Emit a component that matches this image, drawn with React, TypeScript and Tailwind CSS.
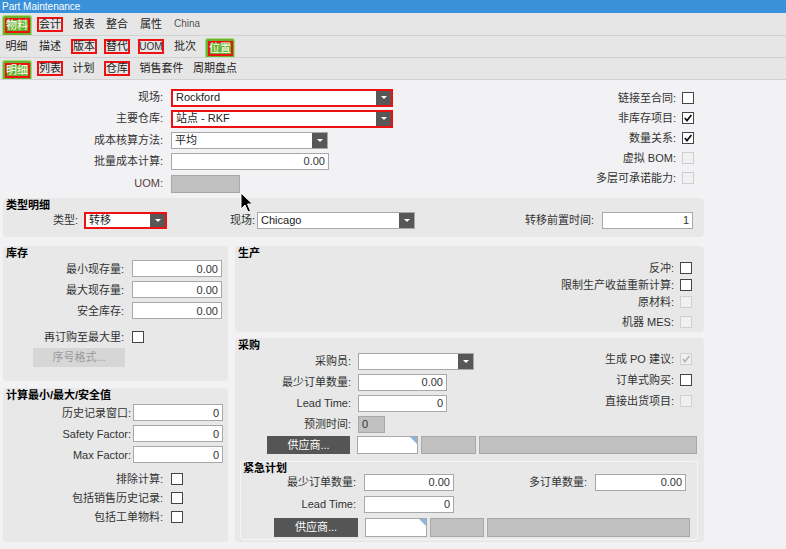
import React from "react";

/**
 * ==============   Bits   ================
 */

function Caret() {
  return (
    <span className="flex h-full w-[15px] shrink-0 items-center justify-center bg-[#575757]">
      <span className="h-0 w-0 border-x-[3px] border-t-[3px] border-x-transparent border-t-white" />
    </span>
  );
}

function Check({ checked = false, disabled = false }: { checked?: boolean; disabled?: boolean }) {
  return (
    <span
      className={
        disabled
          ? "flex h-[12px] w-[12px] shrink-0 items-center justify-center border border-[#d0d0d0] bg-[#f0f0f0]"
          : "flex h-[12px] w-[12px] shrink-0 items-center justify-center border border-[#444] bg-white"
      }
    >
      {checked ? (
        <svg width="10" height="10" viewBox="0 0 10 10">
          <path
            d="M1.8 5 L4 7.6 L8.4 2"
            stroke={disabled ? "#b5b5b5" : "#111"}
            strokeWidth="1.7"
            fill="none"
          />
        </svg>
      ) : null}
    </span>
  );
}

function Field({ className = "", value = "" }: { className?: string; value?: string }) {
  return (
    <div
      className={`flex h-[17px] shrink-0 items-center justify-end border border-[#a8a8a8] bg-white px-[3px] text-[11px] text-[#333] ${className}`}
    >
      {value}
    </div>
  );
}

function Select({ className = "", value = "", red = false }: { className?: string; value?: string; red?: boolean }) {
  return (
    <div
      className={`flex h-[17px] shrink-0 items-stretch bg-white ${
        red ? "border-2 border-[#ee1111]" : "border border-[#a8a8a8]"
      } ${className}`}
    >
      <span className="flex flex-1 items-center px-[3px] text-[11px] text-[#222]">{value}</span>
      <Caret />
    </div>
  );
}

function Panel({ title, className = "", children }: { title: string; className?: string; children?: React.ReactNode }) {
  return (
    <div className={`flex flex-col rounded-[4px] bg-[#e8e8e8] ${className}`}>
      <div className="h-[13px] pl-[3px] pt-[1px] text-[11px] font-bold leading-[12px] text-black">{title}</div>
      {children}
    </div>
  );
}

function CheckRow({ label, checked, disabled }: { label: string; checked?: boolean; disabled?: boolean }) {
  return (
    <div className="flex h-[12px] items-center justify-end gap-[6px] text-[11px] leading-[12px] text-[#333]">
      <span>{label}:</span>
      <Check checked={checked} disabled={disabled} />
    </div>
  );
}

function GreenTab({ label, className = "" }: { label: string; className?: string }) {
  return (
    <span
      className={`mt-[2px] flex w-[30px] shrink-0 items-center justify-center rounded-t-[3px] border border-b-0 border-[#a6d97c] bg-[#68b22e] ${className}`}
    >
      <span className="flex h-[15px] w-[25px] items-center justify-center whitespace-nowrap border-2 border-[#ee1111] text-[11px] leading-none text-white">
        {label}
      </span>
    </span>
  );
}

function RedTab({ label, className = "" }: { label: string; className?: string }) {
  return (
    <span
      className={`flex h-[15px] w-[26px] shrink-0 items-center justify-center self-center whitespace-nowrap border-2 border-[#ee1111] text-[11px] leading-none text-[#222] ${className}`}
    >
      {label}
    </span>
  );
}

function PlainTab({ label, className = "" }: { label: string; className?: string }) {
  return (
    <span
      className={`flex shrink-0 items-center justify-center self-center whitespace-nowrap text-[11px] leading-none text-[#222] ${className}`}
    >
      {label}
    </span>
  );
}

export default function App() {
  return (
    <div className="relative h-[549px] w-[786px] overflow-hidden bg-[#f2f2f4] font-['Liberation_Sans','Noto_Sans_CJK_SC',sans-serif]">
      {/* title bar */}
      <div className="flex h-[13px] items-center bg-[#3a91da] pl-[2px] text-[10px] leading-none text-white">
        Part Maintenance
      </div>

      {/* tab row 1 */}
      <div className="flex h-[23px] items-stretch border-b border-[#d2d2d2] bg-[#e6e6e6]">
        <GreenTab label="物料" className="ml-[2px]" />
        <RedTab label="会计" className="ml-[5px]" />
        <PlainTab label="报表" className="ml-[11px] w-[20px]" />
        <PlainTab label="整合" className="ml-[13px] w-[20px]" />
        <PlainTab label="属性" className="ml-[14px] w-[20px]" />
        <PlainTab label="China" className="ml-[13px] w-[26px] !text-[10px] !text-[#555]" />
      </div>

      {/* tab row 2 */}
      <div className="flex h-[22px] items-stretch border-b border-[#d2d2d2] bg-[#e6e6e6]">
        <PlainTab label="明细" className="ml-[6px] w-[21px]" />
        <PlainTab label="描述" className="ml-[13px] w-[20px]" />
        <RedTab label="版本" className="ml-[11px]" />
        <RedTab label="替代" className="ml-[7px]" />
        <RedTab label="UOM" className="ml-[8px] !text-[10px] !text-[#333]" />
        <PlainTab label="批次" className="ml-[11px] w-[20px]" />
        <GreenTab label="位置" className="ml-[10px]" />
      </div>

      {/* tab row 3 */}
      <div className="flex h-[22px] items-stretch border-b border-[#d2d2d2] bg-[#e6e6e6]">
        <GreenTab label="明细" className="ml-[2px]" />
        <RedTab label="列表" className="ml-[5px]" />
        <PlainTab label="计划" className="ml-[10px] w-[21px]" />
        <RedTab label="仓库" className="ml-[10px]" />
        <PlainTab label="销售套件" className="ml-[11px] w-[41px]" />
        <PlainTab label="周期盘点" className="ml-[11px] w-[44px]" />
      </div>

      {/* top form */}
      <div className="flex h-[118px] pt-[7px]">
        <div className="grid w-[400px] grid-cols-[163px_auto] content-start items-center gap-x-[8px] text-[11px] text-[#333]">
          <span className="flex h-[21px] items-center justify-end">现场:</span>
          <Select red value="Rockford" className="h-[18px] w-[222px]" />
          <span className="flex h-[21px] items-center justify-end">主要仓库:</span>
          <Select red value="站点 - RKF" className="h-[18px] w-[222px]" />
          <span className="flex h-[22px] items-center justify-end">成本核算方法:</span>
          <Select value="平均" className="w-[157px]" />
          <span className="flex h-[21px] items-center justify-end">批量成本计算:</span>
          <Field value="0.00" className="w-[158px]" />
          <span className="flex h-[23px] items-center justify-end text-[#5a3d3d]">UOM:</span>
          <div className="h-[18px] w-[69px] border border-[#a8a8a8] bg-[#c0c0c0]" />
        </div>
        <div className="ml-auto mr-[92px] flex flex-col gap-[8px] pt-[5px]">
          <CheckRow label="链接至合同" />
          <CheckRow label="非库存项目" checked />
          <CheckRow label="数量关系" checked />
          <CheckRow label="虚拟 BOM" disabled />
          <CheckRow label="多层可承诺能力" disabled />
        </div>
      </div>

      {/* type panel */}
      <Panel title="类型明细" className="ml-[3px] h-[39px] w-[701px]">
        <div className="mt-[1px] flex items-center text-[11px] text-[#333]">
          <span className="ml-[45px] w-[30px] text-right">类型:</span>
          <Select red value="转移" className="ml-[6px] h-[17px] w-[83px]" />
          <span className="ml-[63px]">现场:</span>
          <Select value="Chicago" className="ml-[2px] w-[158px]" />
          <span className="ml-[110px]">转移前置时间:</span>
          <Field value="1" className="ml-[8px] w-[91px]" />
        </div>
      </Panel>

      {/* lower area */}
      <div className="mt-[9px] flex gap-[7px] pl-[3px]">
        <div className="flex w-[225px] flex-col gap-[7px]">
          <Panel title="库存" className="h-[135px]">
            <div className="grid grid-cols-[121px_90px] items-center gap-x-[8px] gap-y-[4px] pt-[1px] text-[11px] leading-[16px] text-[#333]">
              <span className="text-right">最小现存量:</span>
              <Field value="0.00" className="h-[16px]" />
              <span className="text-right">最大现存量:</span>
              <Field value="0.00" className="h-[16px]" />
              <span className="text-right">安全库存:</span>
              <Field value="0.00" className="h-[16px]" />
              <span className="mt-[6px] text-right">再订购至最大里:</span>
              <span className="mt-[6px]">
                <Check />
              </span>
            </div>
            <div className="ml-[30px] mt-[3px] flex h-[19px] w-[92px] items-center justify-center bg-[#d6d6d6] text-[11px] text-[#9a9a9a]">
              序号格式...
            </div>
          </Panel>

          <Panel title="计算最小/最大/安全值" className="h-[154px]">
            <div className="grid grid-cols-[128px_90px] items-center gap-x-[2px] gap-y-[4px] pt-[3px] text-[11px] leading-[16px] text-[#333]">
              <span className="text-right">历史记录窗口:</span>
              <Field value="0" className="h-[16px]" />
              <span className="text-right">Safety Factor:</span>
              <Field value="0" className="h-[16px]" />
              <span className="text-right">Max Factor:</span>
              <Field value="0" className="h-[16px]" />
            </div>
            <div className="mt-[10px] grid grid-cols-[160px_12px] items-center gap-x-[8px] gap-y-[7px] text-[11px] leading-[12px] text-[#333]">
              <span className="text-right">排除计算:</span>
              <Check />
              <span className="text-right">包括销售历史记录:</span>
              <Check />
              <span className="text-right">包括工单物料:</span>
              <Check />
            </div>
          </Panel>
        </div>

        <div className="flex w-[469px] flex-col gap-[6px]">
          <Panel title="生产" className="h-[86px]">
            <div className="mr-[12px] mt-[3px] flex flex-col gap-[5px]">
              <CheckRow label="反冲" />
              <CheckRow label="限制生产收益重新计算" />
              <CheckRow label="原材料" disabled />
              <div className="mt-[3px]">
                <CheckRow label="机器 MES" disabled />
              </div>
            </div>
          </Panel>

          <Panel title="采购" className="h-[204px]">
            <div className="flex">
              <div className="mt-[2px] grid grid-cols-[116px_auto] content-start items-center gap-x-[7px] gap-y-[4px] text-[11px] text-[#333]">
                <span className="text-right">采购员:</span>
                <Select className="w-[116px]" />
                <span className="text-right">最少订单数量:</span>
                <Field value="0.00" className="w-[89px]" />
                <span className="text-right">Lead Time:</span>
                <Field value="0" className="w-[89px]" />
                <span className="text-right">预测时间:</span>
                <div className="flex h-[17px] w-[27px] items-center border border-[#a8a8a8] bg-[#c0c0c0] px-[3px] text-[11px]">
                  0
                </div>
              </div>
              <div className="ml-auto mr-[12px] mt-[2px] flex flex-col gap-[9px]">
                <CheckRow label="生成 PO 建议" checked disabled />
                <CheckRow label="订单式购买" />
                <CheckRow label="直接出货项目" disabled />
              </div>
            </div>
            <div className="mt-[3px] flex h-[18px] items-stretch gap-[3px]">
              <div className="ml-[32px] mr-[4px] flex w-[83px] items-center justify-center bg-[#555] text-[11px] text-white">
                供应商...
              </div>
              <div className="relative w-[61px] border border-[#a8a8a8] bg-white">
                <span className="absolute right-0 top-0 h-0 w-0 border-l-[7px] border-t-[7px] border-l-transparent border-t-[#8fb4da]" />
              </div>
              <div className="w-[55px] border border-[#a8a8a8] bg-[#c0c0c0]" />
              <div className="w-[218px] border border-[#a8a8a8] bg-[#c0c0c0]" />
            </div>

            <div className="ml-[5px] mt-[7px] flex h-[79px] w-[458px] flex-col rounded-[3px] border border-[#f6f6f6] bg-[#e8e8e8]">
              <div className="h-[12px] pl-[2px] text-[11px] font-bold leading-[12px] text-black">紧急计划</div>
              <div className="flex items-center text-[11px] text-[#333]">
                <span className="w-[115px] text-right">最少订单数量:</span>
                <Field value="0.00" className="ml-[8px] w-[90px]" />
                <span className="ml-[75px]">多订单数量:</span>
                <Field value="0.00" className="ml-[8px] w-[91px]" />
              </div>
              <div className="mt-[5px] flex items-center text-[11px] text-[#333]">
                <span className="w-[115px] text-right">Lead Time:</span>
                <Field value="0" className="ml-[8px] w-[90px]" />
              </div>
              <div className="mt-[5px] flex h-[19px] items-stretch gap-[3px]">
                <div className="ml-[33px] mr-[4px] flex w-[84px] items-center justify-center bg-[#555] text-[11px] text-white">
                  供应商...
                </div>
                <div className="relative w-[62px] border border-[#a8a8a8] bg-white">
                  <span className="absolute right-0 top-0 h-0 w-0 border-l-[7px] border-t-[7px] border-l-transparent border-t-[#8fb4da]" />
                </div>
                <div className="w-[54px] border border-[#a8a8a8] bg-[#c0c0c0]" />
                <div className="w-[203px] border border-[#a8a8a8] bg-[#c0c0c0]" />
              </div>
            </div>
          </Panel>
        </div>
      </div>

      {/* mouse pointer */}
      <svg className="absolute left-[240px] top-[192px]" width="14" height="22" viewBox="0 0 14 22">
        <path d="M1 1 L1 17 L5 13 L8 20 L10.5 19 L7.5 12 L12.5 12 Z" fill="#000" stroke="#fff" strokeWidth="1" />
      </svg>
    </div>
  );
}
